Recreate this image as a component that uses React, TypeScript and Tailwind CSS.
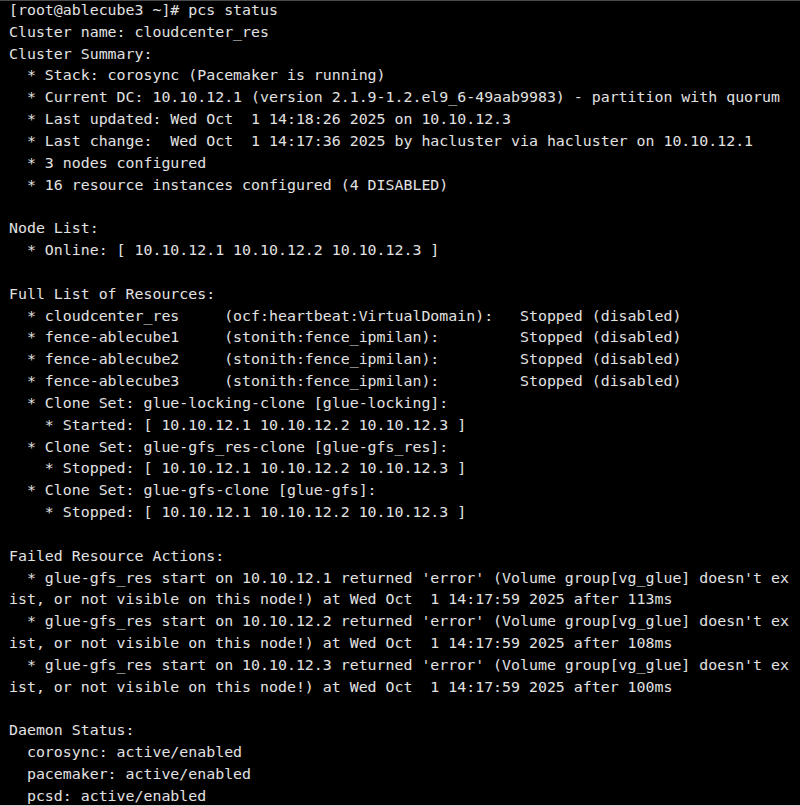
import React from "react";

const lines = [
  "[root@ablecube3 ~]# pcs status",
  "Cluster name: cloudcenter_res",
  "Cluster Summary:",
  "  * Stack: corosync (Pacemaker is running)",
  "  * Current DC: 10.10.12.1 (version 2.1.9-1.2.el9_6-49aab9983) - partition with quorum",
  "  * Last updated: Wed Oct  1 14:18:26 2025 on 10.10.12.3",
  "  * Last change:  Wed Oct  1 14:17:36 2025 by hacluster via hacluster on 10.10.12.1",
  "  * 3 nodes configured",
  "  * 16 resource instances configured (4 DISABLED)",
  "",
  "Node List:",
  "  * Online: [ 10.10.12.1 10.10.12.2 10.10.12.3 ]",
  "",
  "Full List of Resources:",
  "  * cloudcenter_res     (ocf:heartbeat:VirtualDomain):   Stopped (disabled)",
  "  * fence-ablecube1     (stonith:fence_ipmilan):         Stopped (disabled)",
  "  * fence-ablecube2     (stonith:fence_ipmilan):         Stopped (disabled)",
  "  * fence-ablecube3     (stonith:fence_ipmilan):         Stopped (disabled)",
  "  * Clone Set: glue-locking-clone [glue-locking]:",
  "    * Started: [ 10.10.12.1 10.10.12.2 10.10.12.3 ]",
  "  * Clone Set: glue-gfs_res-clone [glue-gfs_res]:",
  "    * Stopped: [ 10.10.12.1 10.10.12.2 10.10.12.3 ]",
  "  * Clone Set: glue-gfs-clone [glue-gfs]:",
  "    * Stopped: [ 10.10.12.1 10.10.12.2 10.10.12.3 ]",
  "",
  "Failed Resource Actions:",
  "  * glue-gfs_res start on 10.10.12.1 returned 'error' (Volume group[vg_glue] doesn't ex",
  "ist, or not visible on this node!) at Wed Oct  1 14:17:59 2025 after 113ms",
  "  * glue-gfs_res start on 10.10.12.2 returned 'error' (Volume group[vg_glue] doesn't ex",
  "ist, or not visible on this node!) at Wed Oct  1 14:17:59 2025 after 108ms",
  "  * glue-gfs_res start on 10.10.12.3 returned 'error' (Volume group[vg_glue] doesn't ex",
  "ist, or not visible on this node!) at Wed Oct  1 14:17:59 2025 after 100ms",
  "",
  "Daemon Status:",
  "  corosync: active/enabled",
  "  pacemaker: active/enabled",
  "  pcsd: active/enabled",
];

export default function App() {
  return (
    <div className="relative h-[806px] w-[800px] overflow-hidden bg-black">
      <div className="absolute left-0 right-0 top-0 h-px bg-[#4a4a4a]" />
      <pre
        className="pl-[9px] text-[14.9px] leading-[21.83px] text-[#e2e2e2] whitespace-pre"
        style={{ fontFamily: '"DejaVu Sans Mono", "Liberation Mono", monospace' }}
      >
        {lines.map((l, i) => (
          <div key={i} className="h-[21.83px]">
            {l === "" ? "\u00a0" : l}
          </div>
        ))}
      </pre>
      <div className="absolute bottom-0 left-0 right-0 h-px bg-[#d0d0d0]" />
    </div>
  );
}
